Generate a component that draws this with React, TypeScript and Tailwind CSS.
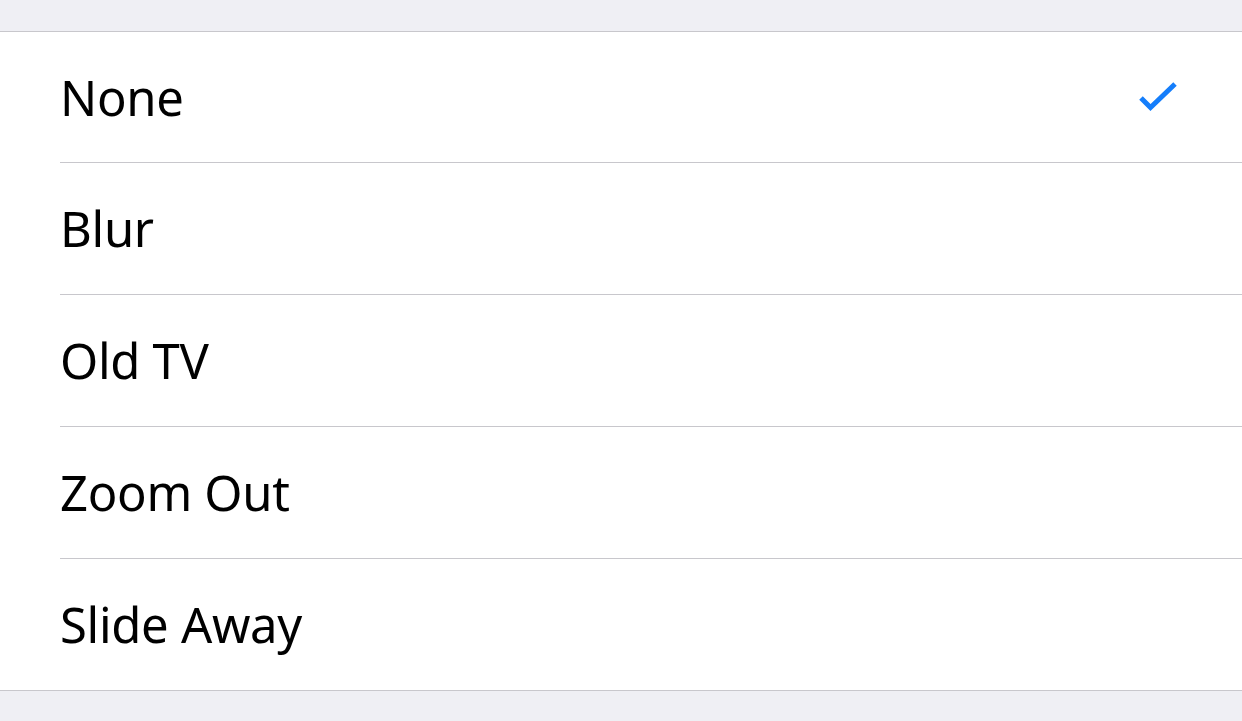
const options = ["None", "Blur", "Old TV", "Zoom Out", "Slide Away"];

function Check() {
  return (
    <svg width="42" height="32" viewBox="0 0 42 32" className="text-[#157efb]">
      <path
        d="M3 17 L12.5 26.5 L37 3"
        fill="none"
        stroke="currentColor"
        strokeWidth="5"
        strokeLinecap="butt"
        strokeLinejoin="miter"
      />
    </svg>
  );
}

export default function App() {
  const selected = "None";

  return (
    <div className="min-h-screen bg-[#efeff4] pt-[31px]" style={{ fontFamily: '"Noto Sans", "Open Sans", sans-serif' }}>
      <ul className="bg-white border-t border-b border-[#c8c7cc]">
        {options.map((name, i) => {
          const first = i === 0;
          const last = i === options.length - 1;
          return (
            <li key={name} className="pl-[60px]">
              <div
                className={
                  "flex items-center justify-between pr-[62px] " +
                  (last ? "h-[131px]" : first ? "h-[131px] border-b border-[#c8c7cc]" : "h-[132px] border-b border-[#c8c7cc]")
                }
              >
                <span className="text-[49px] text-black tracking-[-0.3px] leading-none">{name}</span>
                {name === selected && <Check />}
              </div>
            </li>
          );
        })}
      </ul>
    </div>
  );
}
